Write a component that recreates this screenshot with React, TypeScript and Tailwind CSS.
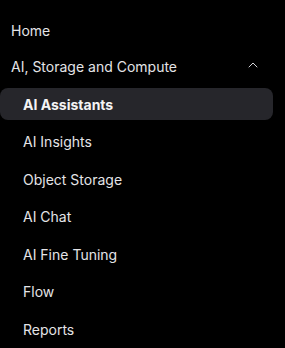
import React from "react";

const items = [
  "AI Assistants",
  "AI Insights",
  "Object Storage",
  "AI Chat",
  "AI Fine Tuning",
  "Flow",
  "Reports",
];

export default function App() {
  return (
    <div
      className="w-[285px] h-[348px] bg-black text-[#e4e4e7] text-[14px] overflow-hidden"
      style={{ fontFamily: "Inter, 'Noto Sans', sans-serif" }}
    >
      <div className="pt-[20px] flex flex-col">
        <div className="h-[20px] flex items-center pl-[11px]">Home</div>
        <div className="mt-[16.5px] h-[20px] flex items-center justify-between pl-[11px] pr-[24px]">
          <span>AI, Storage and Compute</span>
          <svg className="mb-1" width="16" height="16" viewBox="0 0 24 24" fill="none" stroke="#d4d4d8" strokeWidth="1.5" strokeLinecap="round" strokeLinejoin="round">
            <path d="m18 15-6-6-6 6" />
          </svg>
        </div>
        <div className="mt-[11.5px] flex flex-col gap-[5.5px] pr-[12px]">
          {items.map((it, i) => (
            <div
              key={it}
              className={
                "h-8 flex items-center pl-[23px] rounded-lg " +
                (i === 0 ? "bg-[#26262b] font-bold text-[#f4f4f5]" : "")
              }
            >
              {it}
            </div>
          ))}
        </div>
      </div>
    </div>
  );
}
